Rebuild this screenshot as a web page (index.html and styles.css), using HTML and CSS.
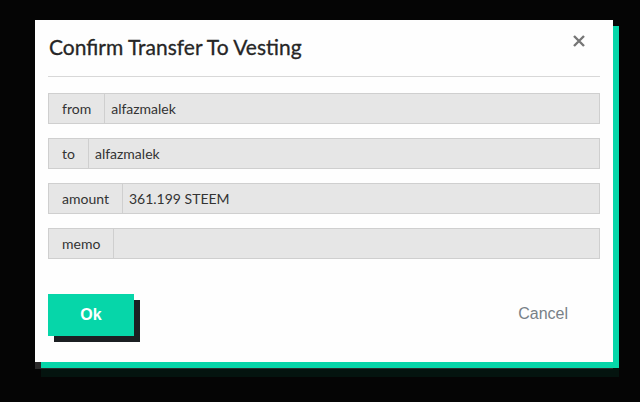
FILE: index.html
```html
<!DOCTYPE html>
<html>
<head>
<meta charset="utf-8">
<link rel="stylesheet" href="styles.css">
</head>
<body>
<div class="stage">
  <div class="modal">
    <div class="header">
      <h1 class="title">Confirm Transfer To Vesting</h1>
      <svg class="close" width="12" height="12" viewBox="0 0 12 12" aria-label="close">
        <path d="M1 1 L11 11 M11 1 L1 11" stroke="#767676" stroke-width="2.4" stroke-linecap="butt"/>
      </svg>
    </div>
    <div class="rule"></div>
    <div class="rows">
      <div class="row"><span class="label">from</span><span class="value">alfazmalek</span></div>
      <div class="row"><span class="label">to</span><span class="value">alfazmalek</span></div>
      <div class="row"><span class="label">amount</span><span class="value">361.199 STEEM</span></div>
      <div class="row"><span class="label">memo</span><span class="value"></span></div>
    </div>
    <div class="actions">
      <button class="ok">Ok</button>
      <button class="cancel">Cancel</button>
    </div>
  </div>
</div>
</body>
</html>
```
FILE: styles.css
```css
html, body {
  margin: 0;
  padding: 0;
  background: #050505;
  width: 640px;
  height: 402px;
  overflow: hidden;
}
.stage {
  padding-top: 20px;
  padding-left: 35px;
}
.modal {
  width: 578px;
  height: 342px;
  box-sizing: border-box;
  background: #fefefe;
  padding: 0 13px;
  box-shadow: 6px 6px 0 #06d6a9, 0 7px 0 #2a2a2a, 6px 15px 0 #04140f;
  font-family: Lato, "Open Sans", sans-serif;
  color: #333;
}
.header {
  display: flex;
  justify-content: space-between;
  align-items: flex-start;
  height: 56px;
  box-sizing: border-box;
  padding-top: 13px;
}
.title {
  margin: 0 0 0 1px;
  font-size: 21px;
  font-weight: 400;
  line-height: 28px;
  color: #262626;
  -webkit-text-stroke: 0.3px #262626;
}
.close {
  display: block;
  margin: 2px 15px 0 0;
}
.rule {
  height: 1px;
  background: #d8d8d8;
}
.rows {
  display: flex;
  flex-direction: column;
  gap: 14px;
  padding-top: 16px;
}
.row {
  display: flex;
  height: 31px;
  box-sizing: border-box;
  border: 1px solid #cfcfcf;
  background: #e6e6e6;
  font-size: 14px;
  line-height: 29px;
}
.label {
  padding: 0 13px;
  border-right: 1px solid #cfcfcf;
  color: #333;
}
.value {
  padding-left: 6px;
  color: #333;
}
.actions {
  display: flex;
  justify-content: space-between;
  align-items: center;
  margin-top: 35px;
}
.ok {
  width: 86px;
  height: 42px;
  border: 0;
  background: #06d6a9;
  color: #fff;
  font-family: "Liberation Sans", Arial, sans-serif;
  font-weight: 700;
  font-size: 16px;
  box-shadow: 6px 6px 0 #1b1f22;
  padding: 0;
  margin: 0;
}
.cancel {
  border: 0;
  background: transparent;
  color: #788187;
  font-family: "Liberation Sans", Arial, sans-serif;
  font-size: 16px;
  padding: 0;
  margin: 0 32px 3px 0;
}
```
